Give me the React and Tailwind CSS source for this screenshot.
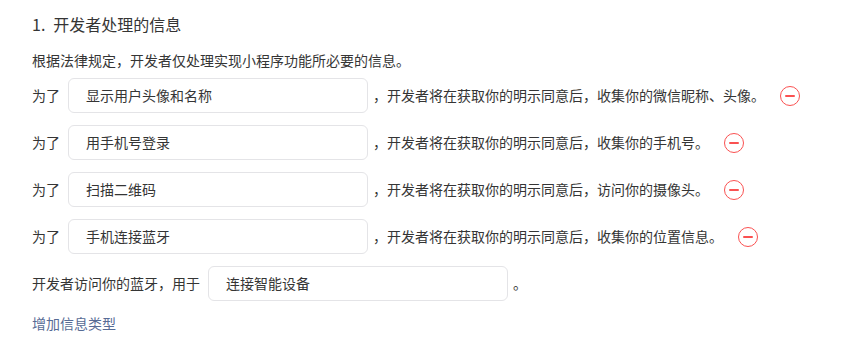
import React from 'react';

const rows = [
  { purpose: '显示用户头像和名称', text: '，开发者将在获取你的明示同意后，收集你的微信昵称、头像。' },
  { purpose: '用手机号登录', text: '，开发者将在获取你的明示同意后，收集你的手机号。' },
  { purpose: '扫描二维码', text: '，开发者将在获取你的明示同意后，访问你的摄像头。' },
  { purpose: '手机连接蓝牙', text: '，开发者将在获取你的明示同意后，收集你的位置信息。' },
];

function RemoveButton() {
  return (
    <button className="ml-[15px] w-[20px] h-[20px] rounded-full border border-[#fa5151] flex items-center justify-center shrink-0">
      <span className="block w-[10px] h-[2px] bg-[#fa5151] rounded-sm" />
    </button>
  );
}

function TextBox({ value }) {
  return (
    <div className="w-[300px] h-[35px] border border-[#e4e4e7] rounded-[6px] bg-white flex items-center pl-[17px] text-[14px] text-[#353535] shrink-0">
      {value}
    </div>
  );
}

export default function App() {
  return (
    <div
      className="w-[863px] h-[358px] bg-white pl-[32px] pt-[12px] text-[#353535]"
      style={{ fontFamily: '"Noto Sans CJK SC", "Noto Sans", sans-serif' }}
    >
      <h2 className="text-[16px] leading-[24px] flex">
        <span>1.</span>
        <span className="ml-[8px]">开发者处理的信息</span>
      </h2>
      <p className="mt-[14px] text-[14px] leading-[20px]">根据法律规定，开发者仅处理实现小程序功能所必要的信息。</p>

      <div className="mt-[8px] flex flex-col gap-[12px]">
        {rows.map(row => (
          <div key={row.purpose} className="flex items-center text-[14px]">
            <span className="w-[36px] shrink-0">为了</span>
            <TextBox value={row.purpose} />
            <span className="ml-[5px] whitespace-nowrap">{row.text}</span>
            <RemoveButton />
          </div>
        ))}
        <div className="flex items-center text-[14px]">
          <span className="w-[176px] shrink-0 whitespace-nowrap">开发者访问你的蓝牙，用于</span>
          <TextBox value="连接智能设备" />
          <span className="ml-[5px]">。</span>
        </div>
      </div>

      <a className="block mt-[12px] text-[14px] leading-[20px] text-[#576b95] cursor-pointer">增加信息类型</a>
    </div>
  );
}
